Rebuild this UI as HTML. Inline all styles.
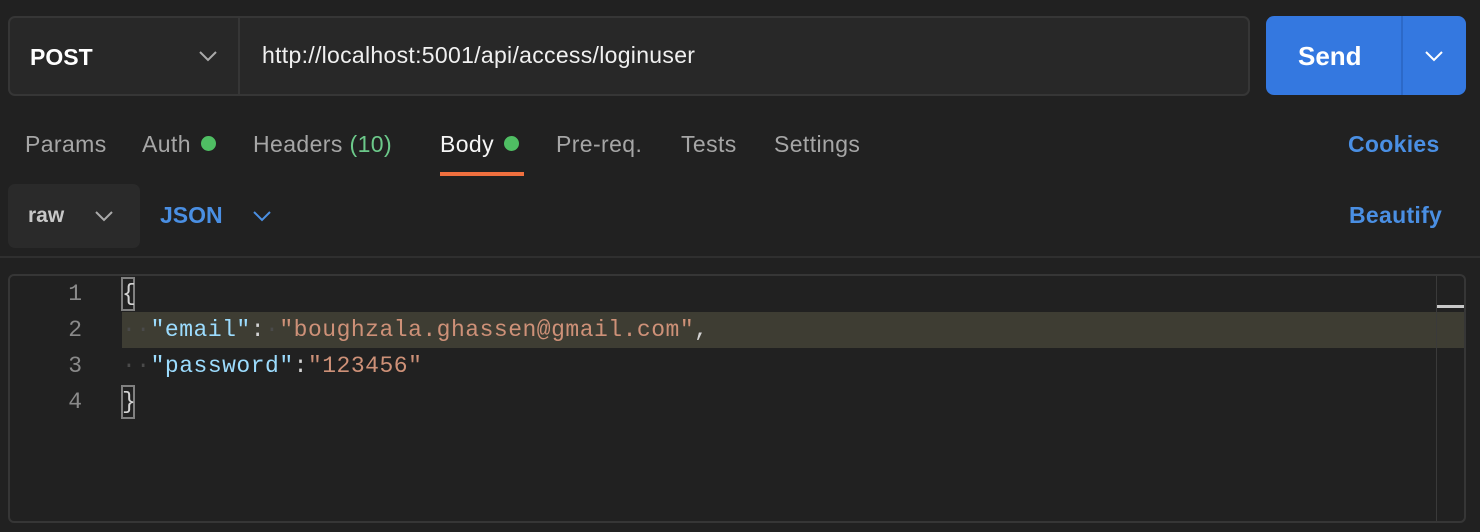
<!DOCTYPE html>
<html><head><meta charset="utf-8"><style>
*{margin:0;padding:0;box-sizing:border-box}
body{width:1480px;height:532px;background:#212121;font-family:"Liberation Sans",sans-serif;position:relative;overflow:hidden}
.a{position:absolute;white-space:nowrap}
.tab{position:absolute;top:129px;font-size:23px;color:#a6a6a6;line-height:30px;letter-spacing:0.4px}
.dot{display:inline-block;width:15px;height:15px;border-radius:50%;background:#4fbe63;margin-left:10px;vertical-align:1px}
.code{position:absolute;font-family:"Liberation Mono",monospace;font-size:23px;letter-spacing:0.5px;line-height:36px;white-space:pre}
.ln{position:absolute;left:40px;width:42px;text-align:right;font-family:"Liberation Mono",monospace;font-size:23px;color:#8a8a8a;line-height:36px}
.k{color:#9cdcfe}.s{color:#ce9178}.p{color:#d4d4d4}.w{color:#4a4a4a}
</style></head><body>
<div class="a" style="left:8px;top:16px;width:1242px;height:80px;border:2px solid #363636;border-radius:7px;background:#282828"></div>
<div class="a" style="left:238px;top:18px;width:2px;height:76px;background:#363636"></div>
<div class="a" style="left:30px;top:42px;font-size:23px;font-weight:bold;color:#fff;line-height:30px">POST</div>
<svg class="a" style="left:198px;top:49px" width="20" height="14"><path d="M2 3 L10 11 L18 3" stroke="#aaa" stroke-width="2" fill="none"/></svg>
<div class="a" style="left:262px;top:40px;font-size:23px;color:#f0f0f0;line-height:30px;letter-spacing:0.3px">http://localhost:5001/api/access/loginuser</div>
<div class="a" style="left:1266px;top:16px;width:200px;height:79px;border-radius:8px;background:#3478e0"></div>
<div class="a" style="left:1401px;top:16px;width:2px;height:79px;background:#2c69c8"></div>
<div class="a" style="left:1298px;top:40px;font-size:26px;font-weight:bold;color:#fff;line-height:32px">Send</div>
<svg class="a" style="left:1424px;top:49px" width="20" height="14"><path d="M2 3 L10 11 L18 3" stroke="#fff" stroke-width="2" fill="none"/></svg>

<div class="tab" style="left:25px">Params</div>
<div class="tab" style="left:142px">Auth<span class="dot"></span></div>
<div class="tab" style="left:253px">Headers <span style="color:#6cc98a">(10)</span></div>
<div class="tab" style="left:440px;color:#f5f5f5">Body<span class="dot"></span></div>
<div class="tab" style="left:556px">Pre-req.</div>
<div class="tab" style="left:681px">Tests</div>
<div class="tab" style="left:774px">Settings</div>
<div class="a" style="left:440px;top:172px;width:84px;height:4px;background:#f0703f"></div>
<div class="a" style="left:1348px;top:129px;font-size:23px;font-weight:bold;color:#4a8fe3;line-height:30px;letter-spacing:0.3px">Cookies</div>

<div class="a" style="left:8px;top:184px;width:132px;height:64px;border-radius:7px;background:#2a2a2a"></div>
<div class="a" style="left:28px;top:202px;font-size:21px;font-weight:bold;color:#c8c8c8;line-height:28px">raw</div>
<svg class="a" style="left:94px;top:209px" width="20" height="14"><path d="M2 3 L10 11 L18 3" stroke="#aaa" stroke-width="2" fill="none"/></svg>
<div class="a" style="left:160px;top:200px;font-size:23px;font-weight:bold;color:#4a8fe3;line-height:30px">JSON</div>
<svg class="a" style="left:252px;top:209px" width="20" height="14"><path d="M2 3 L10 11 L18 3" stroke="#4a8fe3" stroke-width="2" fill="none"/></svg>
<div class="a" style="left:1349px;top:200px;font-size:23px;font-weight:bold;color:#4a8fe3;line-height:30px;letter-spacing:0.3px">Beautify</div>
<div class="a" style="left:0;top:256px;width:1480px;height:2px;background:#2f2f2f"></div>

<div class="a" style="left:8px;top:274px;width:1458px;height:249px;border:2px solid #363636;border-radius:6px;background:#212121"></div>
<div class="a" style="left:122px;top:312px;width:1342px;height:36px;background:#3e3d33"></div>
<div class="a" style="left:1436px;top:276px;width:1px;height:245px;background:#3a3a3a"></div>
<div class="a" style="left:1437px;top:305px;width:27px;height:3px;background:#c8c8c8"></div>
<div class="a" style="left:121px;top:277px;width:14px;height:34px;border:2px solid #808080"></div>
<div class="a" style="left:121px;top:385px;width:14px;height:34px;border:2px solid #808080"></div>
<div class="ln" style="top:276px">1</div>
<div class="ln" style="top:312px">2</div>
<div class="ln" style="top:348px">3</div>
<div class="ln" style="top:384px">4</div>
<div class="code p" style="left:122px;top:276px">{</div>
<div class="code" style="left:122px;top:312px"><span class="w">··</span><span class="k">"email"</span><span class="p">:</span><span class="w">·</span><span class="s">"boughzala.ghassen@gmail.com"</span><span class="p">,</span></div>
<div class="code" style="left:122px;top:348px"><span class="w">··</span><span class="k">"password"</span><span class="p">:</span><span class="s">"123456"</span></div>
<div class="code p" style="left:122px;top:384px">}</div>
</body></html>
